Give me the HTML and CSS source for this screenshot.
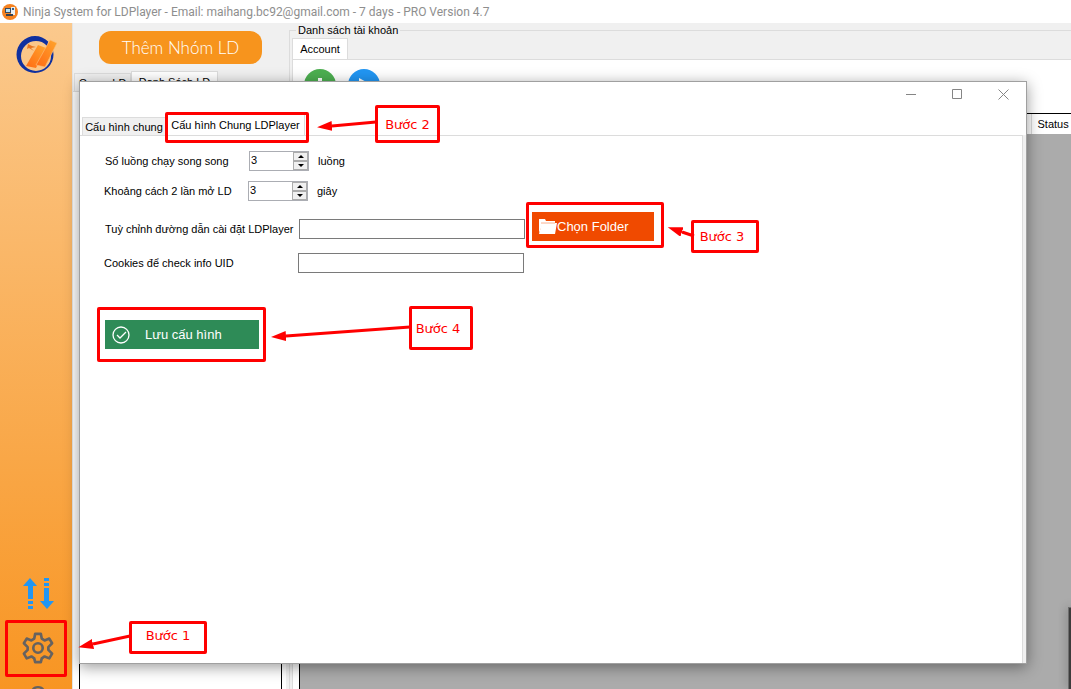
FILE: index.html
```html
<!DOCTYPE html>
<html lang="vi">
<head>
<meta charset="utf-8">
<title>Ninja System for LDPlayer</title>
<link rel="stylesheet" href="styles.css">
</head>
<body>
<div class="app">
  <header class="titlebar">
    <svg class="app-icon" viewBox="0 0 18 18" aria-hidden="true">
      <circle cx="9" cy="9" r="8" fill="#f58220"/>
      <path d="M4 5h6v5H4z" fill="#3c4a5c"/><path d="M5 6h4v3H5z" fill="#b9e3f5"/>
      <path d="M10 4h4v8h-4z" fill="#e8eef2"/><path d="M11 5h2v2h-2z" fill="#35608c"/>
      <path d="M5 11h7v2H5z" fill="#34404f"/>
    </svg>
    <span>Ninja System for LDPlayer - Email: maihang.bc92@gmail.com - 7 days - PRO Version 4.7</span>
  </header>
  <div class="body">
    <nav class="sidebar">
      <svg class="logo" viewBox="0 0 44 40" aria-label="Ninja">
        <defs><linearGradient id="bar" x1="1" y1="0" x2="0" y2="1"><stop offset="0" stop-color="#ffa52d"/><stop offset="1" stop-color="#ff6a13"/></linearGradient></defs>
        <path fill-rule="evenodd" d="M20 1a18 18 0 1 0 0 37a18 18 0 1 0 0-37zM21 6a15 15 0 1 1 0 30a15 15 0 1 1 0-30z" fill="#10309f"/>
        <path d="M33 7l7-2v8l-4 6-4-4z" fill="#fbc58a"/>
        <path d="M23 10l8 3-10 20-10-2z" fill="url(#bar)"/>
        <path d="M35 5l7 3-12 24-9-2z" fill="url(#bar)" stroke="#fbc07c" stroke-width=".6"/>
        <path d="M13 9l4 2 4 1-5 1 3 3-5-3-2 1z" fill="#e87520"/>
      </svg>
      <div class="side-actions">
        <button class="side-button" aria-label="Đồng bộ">
          <svg width="32" height="32" viewBox="0 0 32 32" fill="#2196f3"><path d="M8 0l7 8h-4v13H6V8H1zM6 23h5v3H6zM6 28h5v3H6zM22 0h5v3h-5zM22 5h5v3h-5zM22 10h5v13h5l-7 8-7-8h4z"/></svg>
        </button>
        <button class="side-button" aria-label="Cài đặt">
          <svg width="32" height="32" viewBox="0 0 34 34" fill="none" stroke="#666260" stroke-width="2.800" stroke-linejoin="round"><path d="M14 2h6l1 5 3 2 5-2 3 5-4 4v3l4 4-3 5-5-2-3 2-1 4h-6l-1-4-3-2-5 2-3-5 4-4v-3l-4-4 3-5 5 2 3-2z"/><circle cx="17" cy="17" r="5"/></svg>
        </button>
        <svg class="next-icon" viewBox="0 0 12 12" preserveAspectRatio="xMidYMin slice"><path d="M1 6Q1 1 6 1t5 5" fill="none" stroke="#666260" stroke-width="2"/></svg>
      </div>
    </nav>
    <section class="groups">
      <button class="add-group">Thêm Nhóm LD</button>
      <div class="tabs group-tabs" role="tablist">
        <button class="tab" role="tab">Group LD</button>
        <button class="tab active" role="tab" aria-selected="true">Danh Sách LD</button>
      </div>
      <div class="group-page"><div class="group-list"></div></div>
    </section>
    <fieldset class="accounts">
      <legend>Danh sách tài khoản</legend>
      <div class="tabs" role="tablist"><button class="tab active account-tab" role="tab" aria-selected="true">Account</button></div>
      <div class="account-page">
        <div class="toolbar">
          <button class="round add" aria-label="Thêm"><svg width="32" height="32" viewBox="0 0 32 32"><path d="M14 9h4v5h5v4h-5v5h-4v-5H9v-4h5z" fill="#fff"/></svg></button>
          <button class="round run" aria-label="Chạy"><svg width="32" height="32" viewBox="0 0 32 32"><path d="M11 9l13 7-13 7z" fill="#fff"/></svg></button>
        </div>
        <div class="grid"><table><thead><tr><th></th><th class="status">Status</th></tr></thead></table></div>
      </div>
    </fieldset>
  </div>

  <div class="side-window"></div>

  <section class="dialog" role="dialog" aria-label="Cấu hình">
    <div class="window-buttons">
      <button aria-label="Thu nhỏ"><svg width="11" height="11"><path d="M0 5.500h10" stroke="#858585"/></svg></button>
      <button aria-label="Phóng to"><svg width="11" height="11"><path d="M.5.500h9v9h-9z" fill="none" stroke="#858585"/></svg></button>
      <button aria-label="Đóng"><svg width="11" height="11"><path d="M.5.500l10 10M10.500.500l-10 10" stroke="#858585"/></svg></button>
    </div>
    <div class="tabs dialog-tabs" role="tablist">
      <button class="tab" role="tab">Cấu hình chung</button>
      <button class="tab active" role="tab" aria-selected="true">Cấu hình Chung LDPlayer</button>
    </div>
    <form class="settings">
      <div class="row">
        <label class="short" for="threads">Số luồng chạy song song</label>
        <span class="spinner"><input id="threads" type="number" value="3"><span class="steps"><button type="button" aria-label="Tăng"><svg width="6" height="3"><path d="M0 3l3-3 3 3z"/></svg></button><button type="button" aria-label="Giảm"><svg width="6" height="3"><path d="M0 0l3 3 3-3z"/></svg></button></span></span>
        <span>luồng</span>
      </div>
      <div class="row pull">
        <label class="short" for="delay">Khoảng cách 2 lần mở LD</label>
        <span class="spinner"><input id="delay" type="number" value="3"><span class="steps"><button type="button" aria-label="Tăng"><svg width="6" height="3"><path d="M0 3l3-3 3 3z"/></svg></button><button type="button" aria-label="Giảm"><svg width="6" height="3"><path d="M0 0l3 3 3-3z"/></svg></button></span></span>
        <span>giây</span>
      </div>
      <div class="row tall">
        <label class="long" for="path">Tuỳ chỉnh đường dẫn cài đặt LDPlayer</label>
        <input class="text" id="path" type="text">
        <button class="folder" type="button"><svg width="18" height="16" viewBox="0 0 18 16"><path d="M0 15V1h6l1 2h9v2H4z" fill="#fff"/><path d="M3 5h15l-2 11H0z" fill="#fff"/><path d="M2 5h14" stroke="#f8b090"/></svg><span>Chọn Folder</span></button>
      </div>
      <div class="row pull">
        <label class="long" for="cookies">Cookies để check info UID</label>
        <input class="text" id="cookies" type="text">
      </div>
      <button class="save" type="button"><svg width="18" height="18" viewBox="0 0 18 18" fill="none" stroke="#fff" stroke-width="1.300"><circle cx="9" cy="9" r="8"/><path d="M5 9l3 3 6-6"/></svg><span>Lưu cấu hình</span></button>
    </form>
  </section>

  <div class="notes">
    <svg class="arrows" stroke="#f00" stroke-width="3" fill="none">
      <defs><marker id="head" markerUnits="userSpaceOnUse" markerWidth="16" markerHeight="10" refX="0" refY="5" orient="auto-start-reverse"><path d="M0 0l15 5-15 5z" fill="#f00" stroke="none"/></marker></defs>
      <path d="M130 636L93 644" marker-end="url(#head)"/>
      <path d="M376 122L332 126" marker-end="url(#head)"/>
      <path d="M694 236L682 232" marker-end="url(#head)"/>
      <path d="M410 327L286 336" marker-end="url(#head)"/>
    </svg>
    <div class="mark mark-gear"></div>
    <div class="mark mark-tab"></div>
    <div class="mark mark-folder"></div>
    <div class="mark mark-save"></div>
    <div class="mark step-one">Bước 1</div>
    <div class="mark step-two">Bước 2</div>
    <div class="mark step-three">Bước 3</div>
    <div class="mark step-four">Bước 4</div>
  </div>
</div>
</body>
</html>
```
FILE: styles.css
```css
* { box-sizing: border-box; }
body { margin: 0; font-family: "Liberation Sans", Arial, sans-serif; font-size: 11px; color: #000; }
button, input { font: inherit; color: inherit; margin: 0; padding: 0; }
button { border: 0; background: none; }
svg { display: block; flex: none; }

.app { position: relative; display: flex; flex-direction: column; height: 100vh; overflow: hidden; background: #f0f0f0; }
.titlebar { display: flex; align-items: center; gap: 4px; height: 23px; padding-left: 1px; background: #fff; color: #8e8e8e; font-family: Roboto, sans-serif; font-size: 12px; white-space: nowrap; }
.app-icon { width: 18px; height: 18px; }
.body { display: flex; flex: 1; min-height: 0; }

.sidebar { display: flex; flex-direction: column; justify-content: space-between; width: 72px; padding-top: 12px; background: linear-gradient(#fbc98d, #f89522); }
.logo { width: 44px; height: 40px; margin-left: 15px; }
.side-actions { display: flex; flex-direction: column; align-items: center; padding-left: 3px; }
.side-button { padding: 11px; }
.next-icon { width: 14px; height: 3px; margin-top: 11px; }

.groups { display: flex; flex-direction: column; width: 214px; border-left: 1px solid #e4e4e4; }
.add-group { align-self: flex-start; width: 163px; height: 33px; margin: 8px 0 7px 26px; border-radius: 12px; background: #f7941d; color: #fff; font-family: Lato, sans-serif; font-size: 17px; font-weight: 300; }
.tabs { display: flex; align-items: flex-end; }
.tab { border: 1px solid #dcdcdc; border-bottom: 0; background: #f0f0f0; white-space: nowrap; }
.tab.active { background: #fff; }
.group-tabs { height: 20px; padding-left: 1px; }
.group-tabs .tab { width: 57px; height: 18px; }
.group-tabs .active { width: 87px; height: 20px; }
.group-page { display: flex; flex: 1; padding: 5px 4px 0 6px; border-top: 1px solid #dcdcdc; background: #fff; }
.group-list { flex: 1; border: solid #000; border-width: 1px 1px 0; }

.accounts { display: flex; flex-direction: column; flex: 1; min-width: 0; margin: 0 0 0 3px; padding: 0 0 0 2px; border: 1px solid #dcdcdc; border-width: 1px 0 0 1px; }
.accounts legend { height: 14px; margin-left: 4px; padding: 0 2px; line-height: 14px; }
.account-tab { width: 56px; height: 21px; margin-top: 1px; }
.account-page { display: flex; flex: 1; flex-direction: column; border: 1px solid #dcdcdc; border-width: 1px 0 0 1px; background: #fff; padding-left: 6px; }
.toolbar { display: flex; gap: 12px; height: 53px; padding: 9px 0 0 5px; }
.round { width: 32px; height: 32px; border-radius: 50%; }
.add { background: #4caf50; }
.run { background: #2196f3; }
.grid { flex: 1; border: solid #000; border-width: 1px 0 0 1px; background: #ababab; }
.grid table { width: 100%; border-collapse: collapse; table-layout: fixed; background: #fff; }
.grid th { height: 20px; padding: 0; font-weight: normal; }
.grid .status { width: 40px; padding-left: 6px; border-left: 1px solid #dcdcdc; text-align: left; }

.side-window { position: absolute; right: 0; bottom: 0; width: 3px; height: 82px; border: solid #6e6e6e; border-width: 1px 0 0 1px; background: #3c3c3c; box-shadow: 0 0 10px rgba(0,0,0,.4); }

.dialog { position: absolute; inset: 81px 44px 25px 79px; display: flex; flex-direction: column; border: 1px solid #a0a0a0; background: #fff; box-shadow: 0 3px 14px rgba(0,0,0,.4); }
.window-buttons { display: flex; justify-content: flex-end; gap: 35px; height: 32px; padding: 7px 17px 0 0; }
.window-buttons button { width: 11px; height: 11px; }
.dialog-tabs { height: 21px; padding-left: 2px; }
.dialog-tabs .tab { width: 84px; height: 18px; }
.dialog-tabs .active { width: 139px; height: 21px; }
.settings { display: flex; flex-direction: column; align-items: flex-start; flex: 1; margin-right: 3px; padding: 15px 0 0 25px; border: 1px solid #dcdcdc; border-width: 1px 1px 0 0; box-shadow: 3px 0 #f0f0f0; }
.row { display: flex; align-items: center; height: 20px; margin-bottom: 10px; }
.pull { margin-left: -1px; }
.short { width: 144px; }
.long { width: 194px; }
.spinner { display: flex; width: 60px; height: 20px; margin-right: 9px; border: 1px solid #abadb3; }
.spinner input { flex: 1; min-width: 0; padding: 0 1px 3px; border: 0; appearance: textfield; -moz-appearance: textfield; outline: 0; }
.spinner input::-webkit-inner-spin-button { appearance: none; }
.steps { display: grid; grid-template-rows: 1fr 1fr; width: 15px; }
.steps button { display: grid; place-items: center; border: 1px solid #acacac; background: #f0f0f0; }
.tall { height: 30px; margin: 3px 0 9px; }
.text { width: 226px; height: 20px; border: 1px solid #7a7a7a; background: #fff; }
.folder { display: flex; align-items: center; width: 122px; height: 29px; margin: 0 0 6px 7px; padding-left: 7px; background: #f04a00; color: #fff; font-size: 13px; }
.save { display: flex; align-items: center; gap: 15px; width: 154px; height: 29px; margin-top: 37px; padding-left: 7px; background: #2e8b57; color: #fff; font-size: 13px; }

.notes { position: absolute; inset: 0; pointer-events: none; }
.arrows { width: 100%; height: 100%; }
.mark { position: absolute; display: flex; align-items: center; justify-content: center; border: 3px solid #f00; border-radius: 2px; color: #f00; font-family: "DejaVu Sans", sans-serif; font-size: 13px; white-space: nowrap; }
.mark-gear { left: 5px; bottom: 12px; width: 62px; height: 57px; }
.mark-tab { left: 165px; top: 112px; width: 144px; height: 31px; }
.mark-folder { left: 526px; top: 202px; width: 138px; height: 46px; }
.mark-save { left: 97px; top: 307px; width: 169px; height: 55px; }
.step-one { left: 129px; top: 621px; width: 78px; height: 33px; padding-bottom: 4px; }
.step-two { left: 375px; top: 105px; width: 65px; height: 38px; }
.step-three { left: 691px; top: 220px; width: 68px; height: 33px; padding-right: 6px; }
.step-four { left: 409px; top: 306px; width: 64px; height: 44px; padding-right: 6px; }
```
